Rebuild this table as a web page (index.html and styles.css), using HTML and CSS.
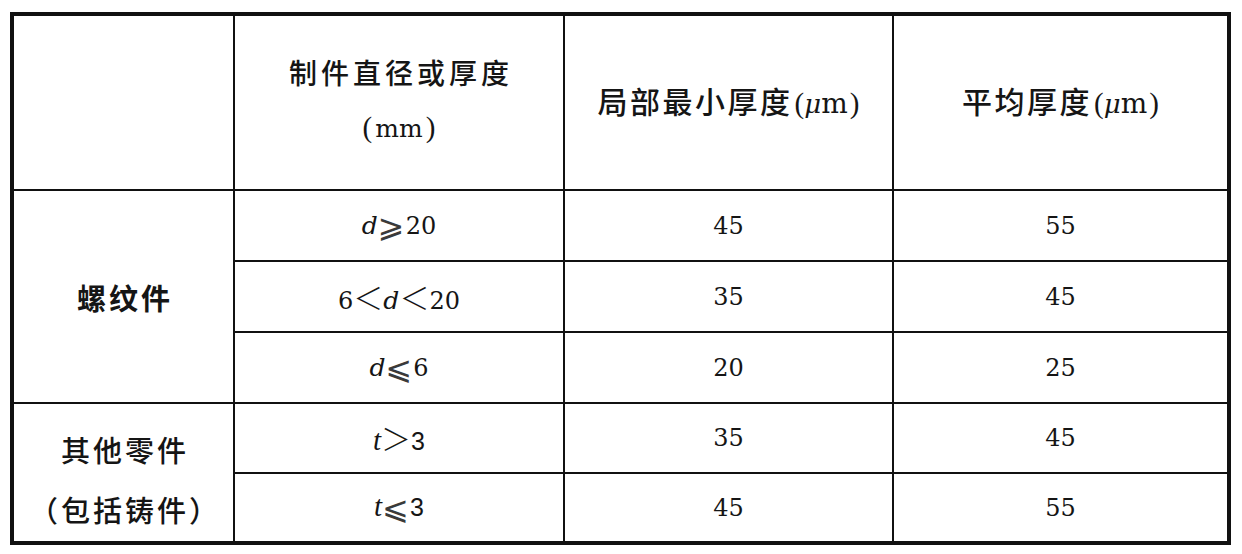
FILE: index.html
```html
<!DOCTYPE html>
<html lang="zh-CN">
<head>
<meta charset="utf-8">
<title>镀层厚度</title>
<link rel="stylesheet" href="styles.css">
</head>
<body>
<div class="sheet">
  <div class="grid">
    <div class="cell c1 head"></div>
    <div class="cell c2 head">
      <div class="h2">
        <span class="line cjk-wide">制件直径或厚度</span>
        <span class="line unit"><span class="par">(</span><span class="mm">mm</span><span class="par">)</span></span>
      </div>
    </div>
    <div class="cell c3 head"><span class="h3"><span class="cjk">局部最小厚度</span><span class="par">(</span><span class="mu">μ</span><span class="mm2">m</span><span class="par">)</span></span></div>
    <div class="cell c4 head"><span class="h3"><span class="cjk">平均厚度</span><span class="par">(</span><span class="mu">μ</span><span class="mm2">m</span><span class="par">)</span></span></div>

    <div class="cell group g1"><span class="grp">螺纹件</span></div>
    <div class="cell"><span class="expr"><span class="var">d</span><span class="rel">⩾</span><span class="dig">20</span></span></div>
    <div class="cell"><span class="dig">45</span></div>
    <div class="cell"><span class="dig">55</span></div>

    <div class="cell"><span class="expr"><span class="dig">6</span><span class="lt">＜</span><span class="var">d</span><span class="lt">＜</span><span class="dig">20</span></span></div>
    <div class="cell"><span class="dig">35</span></div>
    <div class="cell"><span class="dig">45</span></div>

    <div class="cell"><span class="expr"><span class="var">d</span><span class="rel">⩽</span><span class="dig">6</span></span></div>
    <div class="cell"><span class="dig">20</span></div>
    <div class="cell"><span class="dig">25</span></div>

    <div class="cell group g2"><span class="grp two"><span class="line">其他零件</span><span class="line">（包括铸件）</span></span></div>
    <div class="cell"><span class="expr"><span class="var tv">t</span><span class="lt">＞</span><span class="sans">3</span></span></div>
    <div class="cell"><span class="dig">35</span></div>
    <div class="cell"><span class="dig">45</span></div>

    <div class="cell"><span class="expr"><span class="var tv">t</span><span class="rel">⩽</span><span class="sans">3</span></span></div>
    <div class="cell"><span class="dig">45</span></div>
    <div class="cell"><span class="dig">55</span></div>
  </div>
</div>
</body>
</html>
```

FILE: styles.css
```css
html, body {
  margin: 0;
  padding: 0;
  background: #ffffff;
}

.sheet {
  padding: 12px 0 0 10px;
}

.grid {
  display: grid;
  width: 1213px;
  grid-template-columns: 219px 328px 327px 333px;
  grid-template-rows: 173px 69px 69px 69px 68px 67px;
  gap: 2px;
  background: #111111;
  border: 4px solid #111111;
  color: #151515;
}

.cell {
  background: #ffffff;
  display: flex;
  align-items: center;
  justify-content: center;
}

.g1 {
  grid-row: 2 / span 3;
}

.g2 {
  grid-row: 5 / span 2;
  padding-top: 12px;
}

.cjk, .cjk-wide, .grp {
  font-family: "Noto Sans CJK SC", sans-serif;
}

.h2 {
  display: flex;
  flex-direction: column;
  align-items: center;
  line-height: 55px;
  padding-bottom: 2px;
}

.line {
  display: block;
  text-align: center;
  white-space: nowrap;
}

.cjk-wide {
  font-size: 28px;
  font-weight: 500;
  letter-spacing: 4px;
  margin-right: -4px;
}

.par {
  font-family: "Liberation Serif", serif;
  font-size: 29px;
  font-weight: 400;
}

.unit .par {
  margin: 0 3px;
}

.mm {
  font-family: "DejaVu Serif", serif;
  font-size: 25px;
}

.h3 {
  white-space: nowrap;
  padding-bottom: 6px;
}

.h3 .cjk {
  font-size: 30px;
  font-weight: 500;
  letter-spacing: 2.5px;
}

.h3 .par:first-of-type {
  margin-right: 5px;
}

.h3 .par {
  margin-left: 2px;
}

.mm2 {
  font-family: "DejaVu Serif", serif;
  font-size: 28px;
}

.mu {
  font-family: "DejaVu Serif", serif;
  font-style: italic;
  font-size: 26px;
}

.grp {
  font-size: 29px;
  font-weight: 700;
  letter-spacing: 3px;
  margin-right: -3px;
}

.grp.two {
  display: flex;
  flex-direction: column;
  line-height: 60px;
  font-weight: 500;
}

.dig {
  font-family: "DejaVu Serif", serif;
  font-size: 24px;
}

.expr {
  white-space: nowrap;
  line-height: 1;
}

.var {
  font-style: italic;
  font-family: "DejaVu Serif", serif;
  font-size: 25px;
}

.tv {
  font-family: "Liberation Serif", serif;
  font-size: 29px;
}

.rel {
  font-family: "DejaVu Sans", sans-serif;
  font-size: 32px;
  color: #3a3a3a;
  vertical-align: -3px;
  margin: 0 1px 0 0;
}

.lt {
  font-family: "Noto Sans CJK SC", sans-serif;
  font-size: 30px;
  font-weight: 300;
}

.sans {
  font-family: "Liberation Sans", sans-serif;
  font-size: 25px;
}
```
